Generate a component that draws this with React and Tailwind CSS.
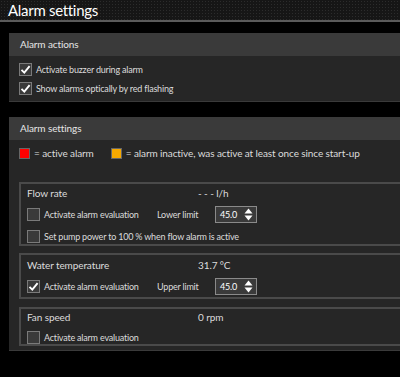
import React from 'react';

const Check = ({ checked }) => (
  <span className="w-[13px] h-[13px] shrink-0 flex items-center justify-center bg-[#3a3a3a] border border-[#7a7a7a]">
    {checked && (
      <svg width="11" height="11" viewBox="0 0 11 11">
        <path d="M1.5 5.8 L4.3 8.6 L9.6 2.2" fill="none" stroke="#fff" strokeWidth="1.9" />
      </svg>
    )}
  </span>
);

const CheckRow = ({ checked, label }) => (
  <div className="flex items-center gap-[4px] h-[13px]">
    <Check checked={checked} />
    <span>{label}</span>
  </div>
);

const Spinner = ({ value }) => (
  <div className="w-[42px] h-[17px] flex items-center justify-between pl-[4px] pr-[3px] bg-[#3a3a3a] border border-[#8a8a8a]">
    <span className="text-white">{value}</span>
    <svg width="9" height="13" viewBox="0 0 9 13">
      <path d="M4.5 0.5 L8.5 5.5 L0.5 5.5 Z" fill="#fff" />
      <path d="M0.5 7.5 L8.5 7.5 L4.5 12.5 Z" fill="#fff" />
    </svg>
  </div>
);

const Panel = ({ title, children, className }) => (
  <div className={`w-[420px] ml-[9px] bg-[#262626] border-b border-[#3a3a3a] ${className}`}>
    <div className="h-[23px] bg-[#3a3a3a] flex items-center pl-[11px] text-[10px] tracking-[-0.1px] text-[#e6e6e6]">{title}</div>
    {children}
  </div>
);

export default function App() {
  return (
    <div
      className="w-[400px] h-[377px] overflow-hidden bg-black text-[9px] tracking-[-0.2px] text-[#dcdcdc]"
      style={{ fontFamily: 'Lato, "Noto Sans", sans-serif' }}
    >
      <div className="h-[22px] bg-[#161616] bg-[radial-gradient(#2c2c2c_1px,transparent_1px)] bg-[length:3px_3px] border-b-2 border-[#5a5a5a] pl-[8px] flex items-center text-[15px] tracking-[-0.3px] text-white">
        Alarm settings
      </div>

      <Panel title="Alarm actions" className="mt-[11px]">
        <div className="flex flex-col gap-[6px] pl-[10px] pt-[7px] pb-[6px]">
          <CheckRow checked label="Activate buzzer during alarm" />
          <CheckRow checked label="Show alarms optically by red flashing" />
        </div>
      </Panel>

      <Panel title="Alarm settings" className="mt-[15px]">
        <div className="flex items-center h-[11px] pl-[10px] mt-[8px] text-[10px] tracking-[-0.1px]">
          <span className="w-[11px] h-[11px] bg-[#ff0000] border border-[#666]" />
          <span className="ml-[4px]">= active alarm</span>
          <span className="ml-[17px] w-[11px] h-[11px] bg-[#f5a800] border border-[#666]" />
          <span className="ml-[4px]">= alarm inactive, was active at least once since start-up</span>
        </div>

        <div className="pl-[10px] pt-[23px] pb-[4px] flex flex-col">
          <div className="border-2 border-r-0 border-[#4a4a4a] pl-[6px] pt-[1px] pb-[1px] flex flex-col">
            <div className="flex items-center h-[16px] text-[10px] tracking-[-0.1px]">
              <span className="w-[171px]">Flow rate</span>
              <span>- - - l/h</span>
            </div>
            <div className="flex items-center mt-[5px] h-[17px]">
              <div className="w-[130px]"><CheckRow label="Activate alarm evaluation" /></div>
              <span className="w-[58px]">Lower limit</span>
              <Spinner value="45.0" />
            </div>
            <div className="mt-[7px]"><CheckRow label="Set pump power to 100 % when flow alarm is active" /></div>
          </div>

          <div className="mt-[7px] border-2 border-r-0 border-[#4a4a4a] pl-[6px] pt-[2px] pb-[2px] flex flex-col">
            <div className="flex items-center h-[16px] text-[10px] tracking-[-0.1px]">
              <span className="w-[171px]">Water temperature</span>
              <span>31.7 °C</span>
            </div>
            <div className="flex items-center mt-[5px] h-[17px]">
              <div className="w-[130px]"><CheckRow checked label="Activate alarm evaluation" /></div>
              <span className="w-[58px]">Upper limit</span>
              <Spinner value="45.0" />
            </div>
          </div>

          <div className="mt-[8px] border-2 border-r-0 border-[#4a4a4a] pl-[6px] flex flex-col">
            <div className="flex items-center h-[16px] text-[10px] tracking-[-0.1px]">
              <span className="w-[171px]">Fan speed</span>
              <span>0 rpm</span>
            </div>
            <div className="mt-[6px]"><CheckRow label="Activate alarm evaluation" /></div>
          </div>
        </div>
      </Panel>
    </div>
  );
}
